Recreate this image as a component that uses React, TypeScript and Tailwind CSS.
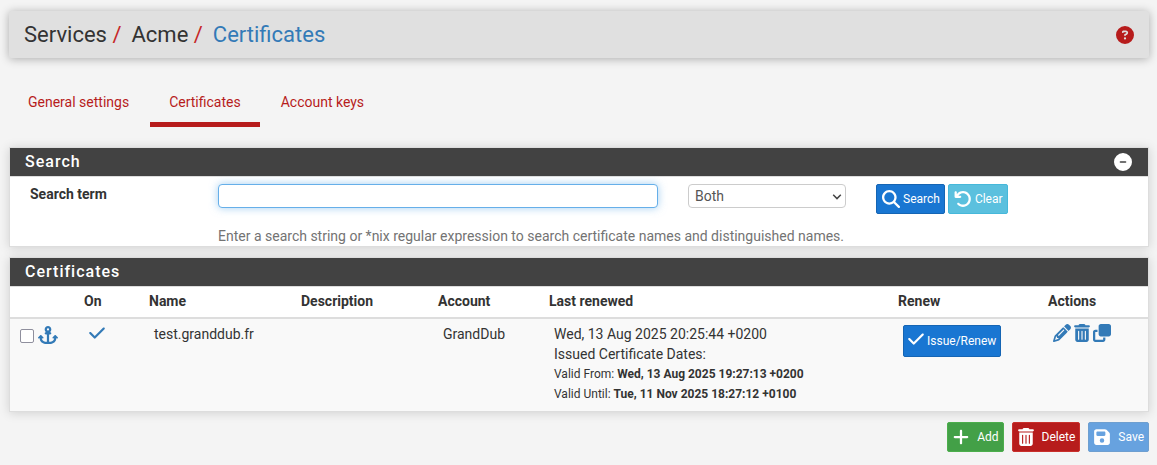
import type { ReactNode } from 'react';
import {
  FaAnchor,
  FaArrowRotateLeft,
  FaCheck,
  FaCircleMinus,
  FaCircleQuestion,
  FaClone,
  FaFloppyDisk,
  FaMagnifyingGlass,
  FaPencil,
  FaPlus,
  FaTrashCan,
} from 'react-icons/fa6';

const tabs = [
  { label: 'General settings', active: false },
  { label: 'Certificates', active: true },
  { label: 'Account keys', active: false },
];

const buttonBase = 'flex h-[30px] items-center rounded-[2px] border pr-1 pl-[5px] text-xs text-white';

function Panel({ title, action, children }: { title: string; action?: ReactNode; children: ReactNode }) {
  return (
    <section className="mb-2.5 border border-[#ddd] bg-white shadow-[0_1px_10px_rgba(0,0,0,0.15)]">
      <div className="flex h-[29px] items-center justify-between border-b border-[#ddd] bg-[#424242] bg-clip-padding pr-4 pl-[15px] text-white">
        <h2 className="text-base font-medium tracking-[1px]">{title}</h2>
        {action}
      </div>
      {children}
    </section>
  );
}

function SearchForm() {
  return (
    <form className="mx-[5px] grid grid-cols-12 pt-[7px]" onSubmit={(e) => e.preventDefault()}>
      <label htmlFor="term" className="col-span-2 px-[15px] font-bold">
        Search term
      </label>
      <div className="col-span-5 px-[15px]">
        <input
          id="term"
          type="text"
          className="block h-6 w-full rounded border border-[#66afe9] bg-white px-1.5 shadow-[0_0_8px_rgba(102,175,233,0.6)] outline-none"
        />
      </div>
      <div className="col-span-2 px-[15px]">
        <div className="relative">
          <select
            aria-label="Search field"
            defaultValue="Both"
            className="block h-6 w-full appearance-none rounded border border-[#ccc] bg-white pr-5 pl-1.5 text-[#555]"
          >
            <option>Both</option>
            <option>Name</option>
            <option>Distinguished name</option>
          </select>
          <svg
            viewBox="0 0 10 6"
            className="pointer-events-none absolute top-[10px] right-1 h-1.5 w-2.5 fill-none stroke-[#444]"
            strokeWidth="1.5"
          >
            <path d="M1.2 0.8 5 4.6 8.8 0.8" />
          </svg>
        </div>
      </div>
      <div className="col-span-3 flex items-start gap-[3px] pl-[15px]">
        <button type="submit" className={`${buttonBase} gap-[3px] border-[#1565b4] bg-[#1976d2]`}>
          <FaMagnifyingGlass className="size-[18px]" />
          Search
        </button>
        <button type="reset" className={`${buttonBase} gap-[3px] border-[#46b8da] bg-[#5bc0de]`}>
          <FaArrowRotateLeft className="size-[18px]" />
          Clear
        </button>
      </div>
      <p className="col-span-10 col-start-3 mt-3 px-[15px] text-[#737373]">
        Enter a search string or *nix regular expression to search certificate names and distinguished names.
      </p>
    </form>
  );
}

function CertificateTable() {
  return (
    <table className="w-full table-fixed text-left">
      <colgroup>
        <col className="w-[69px]" />
        <col className="w-[65px]" />
        <col className="w-[152px]" />
        <col className="w-[137px]" />
        <col className="w-[111px]" />
        <col className="w-[349px]" />
        <col className="w-[150px]" />
        <col className="w-[105px]" />
      </colgroup>
      <thead>
        <tr className="h-[31px] border-b-2 border-[#ddd] align-top [&>th]:pt-1 [&>th]:pl-[5px]">
          <td />
          <th>On</th>
          <th>Name</th>
          <th>Description</th>
          <th>Account</th>
          <th>Last renewed</th>
          <th>Renew</th>
          <th>Actions</th>
        </tr>
      </thead>
      <tbody>
        <tr className="bg-[#f9f9f9] align-top [&>td]:pt-[5px] [&>td]:pb-[7px] [&>td]:pl-2.5">
          <td>
            <div className="flex gap-1 pt-0.5">
              <input
                type="checkbox"
                aria-label="Select test.granddub.fr"
                className="mt-[3px] size-3.5 appearance-none rounded-[2px] border border-[#8f8f9d] bg-white"
              />
              <a href="#move" aria-label="Move" className="text-[#337ab7]">
                <FaAnchor className="h-[18px] w-5" />
              </a>
            </div>
          </td>
          <td>
            <a href="#toggle" aria-label="Enabled" className="inline-block text-[#337ab7]">
              <FaCheck className="h-[18px] w-4" />
            </a>
          </td>
          <td>test.granddub.fr</td>
          <td />
          <td>GrandDub</td>
          <td>
            Wed, 13 Aug 2025 20:25:44 +0200
            <br />
            Issued Certificate Dates:
            <div className="text-xs leading-5">
              Valid From: <b>Wed, 13 Aug 2025 19:27:13 +0200</b>
              <br />
              Valid Until: <b>Tue, 11 Nov 2025 18:27:12 +0100</b>
            </div>
          </td>
          <td>
            <button
              type="button"
              className="mt-px flex h-8 items-center gap-[3px] rounded-[2px] border border-[#1565b4] bg-[#1976d2] px-1 text-xs text-white"
            >
              <FaCheck className="mb-1 h-[18px] w-4" />
              Issue/Renew
            </button>
          </td>
          <td>
            <div className="flex gap-[3px] text-[#337ab7]">
              <a href="#edit" aria-label="Edit">
                <FaPencil className="size-[18px]" />
              </a>
              <a href="#delete" aria-label="Delete">
                <FaTrashCan className="h-[18px] w-4" />
              </a>
              <a href="#copy" aria-label="Copy">
                <FaClone className="size-[18px]" />
              </a>
            </div>
          </td>
        </tr>
      </tbody>
    </table>
  );
}

export default function App() {
  return (
    <div className="min-h-screen bg-[#f4f4f4] pt-[11px] pr-2 pb-3 pl-[9px] font-['Roboto',sans-serif] text-sm text-[#333]">
      <header className="flex h-[47px] items-center justify-between rounded-[2px] bg-[#e0e0e0] px-[15px] shadow-[0_1px_10px_rgba(0,0,0,0.3)]">
        <nav aria-label="Breadcrumb">
          <ol className="flex gap-2.5 text-[22px] leading-7">
            <li>
              Services <span className="text-[#c62828]">/</span>
            </li>
            <li>
              Acme <span className="text-[#c62828]">/</span>
            </li>
            <li>
              <a href="#certificates" className="text-[#337ab7]">
                Certificates
              </a>
            </li>
          </ol>
        </nav>
        <a href="#help" aria-label="Help" className="text-[#b71c1c]">
          <FaCircleQuestion className="size-[18px]" />
        </a>
      </header>

      <nav aria-label="Sections" className="mt-[22px] mb-5 flex gap-0.5">
        {tabs.map((tab) => (
          <a
            key={tab.label}
            href="#tab"
            className={`border-b-[5px] px-[19px] pt-3 pb-2.5 text-[#b71c1c] ${
              tab.active ? 'border-[#b71c1c]' : 'border-transparent'
            }`}
          >
            {tab.label}
          </a>
        ))}
      </nav>

      <main>
        <Panel
          title="Search"
          action={
            <button type="button" aria-label="Collapse">
              <FaCircleMinus className="size-[18px]" />
            </button>
          }
        >
          <SearchForm />
        </Panel>
        <Panel title="Certificates">
          <CertificateTable />
        </Panel>
        <div className="flex justify-end gap-2">
          <button type="button" className={`${buttonBase} gap-2 border-[#4cae4c] bg-[#43a047]`}>
            <FaPlus className="h-[18px] w-4" />
            Add
          </button>
          <button type="button" className={`${buttonBase} gap-2 border-[#c9302c] bg-[#b71c1c]`}>
            <FaTrashCan className="h-[18px] w-4" />
            Delete
          </button>
          <button type="button" disabled className={`${buttonBase} gap-2 border-[#6e9fd0] bg-[#67a2df]`}>
            <FaFloppyDisk className="h-[18px] w-4" />
            Save
          </button>
        </div>
      </main>
    </div>
  );
}
